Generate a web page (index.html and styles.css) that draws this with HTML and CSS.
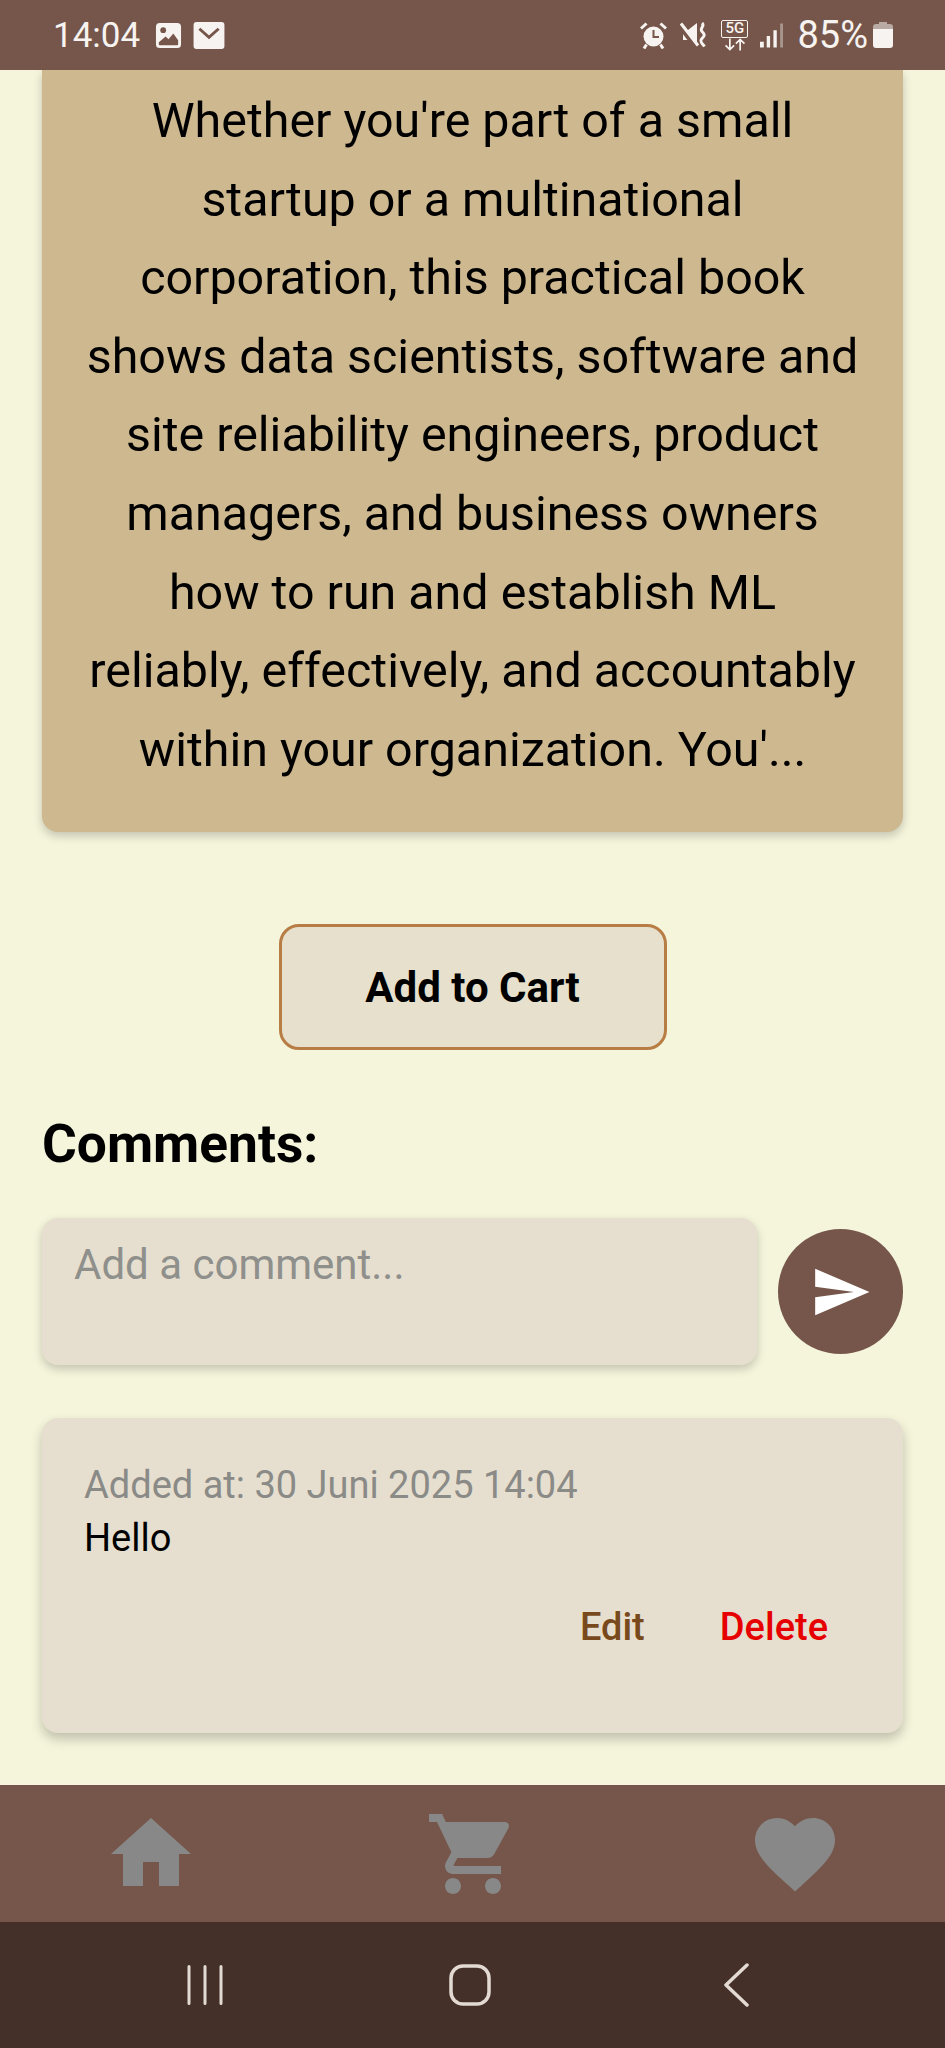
FILE: index.html
```html
<!DOCTYPE html>
<html lang="en">
<head>
<meta charset="utf-8">
<title>Book detail</title>
<link rel="stylesheet" href="styles.css">
</head>
<body>
<div class="phone">
  <header class="status">
    <div class="status-left">
      <span class="time">14:04</span>
      <svg class="ic-gallery" viewBox="0 0 28 28"><path fill="#f7f3f0" fill-rule="evenodd" d="M5 1h18a4 4 0 0 1 4 4v18a4 4 0 0 1-4 4H5a4 4 0 0 1-4-4V5a4 4 0 0 1 4-4zM4 21v2a1 1 0 0 0 1 1h18a1 1 0 0 0 1-1v-4l-5-7-5 6-3-3z"/><circle cx="8.500" cy="8.500" r="3" fill="#76564a"/></svg>
      <svg class="ic-mail" viewBox="0 0 32 28"><rect width="32" height="28" rx="3" fill="#f7f3f0"/><path d="M6 7l10 9 10-9" fill="none" stroke="#76564a" stroke-width="3"/></svg>
    </div>
    <div class="status-right">
      <svg class="ic-alarm" viewBox="0 0 27 27"><circle cx="13.500" cy="14.500" r="10" fill="#f7f3f0"/><path d="M13.500 8v7h5.500" fill="none" stroke="#76564a" stroke-width="2"/><path d="M1 6.500l5.500-5M26 6.500l-5.500-5M6.500 22.500l-2.500 4M20.500 22.500l2.500 4" stroke="#f7f3f0" stroke-width="3"/></svg>
      <svg class="ic-mute" viewBox="0 0 27 26"><path fill="#f7f3f0" d="M3 8h5l9-7v24l-9-7H3z"/><path d="M0 5l16 21" stroke="#76564a" stroke-width="4"/><path d="M1 1.500l17 22" stroke="#f7f3f0" stroke-width="3"/><path d="M22 1c3.500 3-3 5.500 0 8.500s3 4 0 7 .5 5 2.500 8" fill="none" stroke="#f7f3f0" stroke-width="3"/></svg>
      <div class="net">
        <span class="net-5g">5G</span>
        <svg class="net-arrows" viewBox="0 0 28 14"><path d="M8 0v12M3 8l5 5 5-5M20 14V2M15 6l5-5 5 5" fill="none" stroke="#f7f3f0" stroke-width="2"/></svg>
      </div>
      <svg class="ic-signal" viewBox="0 0 24 25"><rect x="0" y="19" width="4" height="6" fill="#f7f3f0"/><rect x="7" y="13" width="3.500" height="12" fill="#f7f3f0"/><rect x="14" y="7" width="3.500" height="18" fill="#f7f3f0"/><rect x="21" y="0" width="3" height="25" fill="#a8958c"/></svg>
      <span class="batt-text">85%</span>
      <svg class="ic-batt" viewBox="0 0 20 26"><path fill="#b9aaa3" d="M6 0h8v3h-8z"/><path fill="#b9aaa3" d="M3 2h14a3 3 0 0 1 3 3v3H0V5a3 3 0 0 1 3-3z"/><path fill="#f7f3f0" d="M0 7h20v16a3 3 0 0 1-3 3H3a3 3 0 0 1-3-3z"/></svg>
    </div>
  </header>

  <main class="content">
    <section class="desc-card">
      <p>Whether you're part of a small startup or a multinational corporation, this practical book shows data scientists, software and site reliability engineers, product managers, and business owners how to run and establish ML reliably, effectively, and accountably within your organization. You'...</p>
    </section>

    <div class="cart-wrap"><button class="cart-btn">Add to Cart</button></div>

    <h2 class="comments-title">Comments:</h2>

    <div class="comment-form">
      <div class="comment-input">Add a comment...</div>
      <button class="send-btn" aria-label="Send">
        <svg class="send-ic" viewBox="0 0 24 24"><path d="M2.010 21L23 12 2.010 3 2 10l15 2-15 2z" fill="#fff"/></svg>
      </button>
    </div>

    <article class="comment-card">
      <div class="comment-date">Added at: 30 Juni 2025 14:04</div>
      <div class="comment-text">Hello</div>
      <div class="comment-actions">
        <span class="act-edit">Edit</span>
        <span class="act-delete">Delete</span>
      </div>
    </article>
  </main>

  <nav class="tabbar">
    <svg class="tab-ic" viewBox="0 0 24 24"><path d="M10 20v-6h4v6h5v-8h3L12 3 2 12h3v8z"/></svg>
    <svg class="tab-ic" viewBox="0 0 24 24"><path d="M7 18c-1.100 0-1.990.9-1.990 2S5.900 22 7 22s2-.9 2-2-.9-2-2-2zM1 2v2h2l3.600 7.590-1.350 2.450c-.16.28-.25.61-.25.96 0 1.100.9 2 2 2h12v-2H7.420c-.14 0-.25-.11-.25-.25l.03-.12.9-1.630h7.450c.75 0 1.410-.41 1.750-1.030l3.580-6.490c.08-.14.12-.31.12-.48 0-.55-.45-1-1-1H5.210l-.94-2H1zm16 16c-1.100 0-1.990.9-1.990 2s.89 2 1.990 2 2-.9 2-2-.9-2-2-2z"/></svg>
    <svg class="tab-ic" viewBox="0 0 24 24"><path d="M12 21.350l-1.450-1.320C5.400 15.360 2 12.280 2 8.500 2 5.420 4.420 3 7.500 3c1.740 0 3.410.81 4.500 2.090C13.090 3.810 14.760 3 16.500 3 19.580 3 22 5.420 22 8.500c0 3.780-3.400 6.860-8.550 11.540L12 21.350z"/></svg>
  </nav>

  <footer class="sysnav">
    <svg class="sys-recent" viewBox="0 0 36 40"><path d="M2 1.500v37M18 1.500v37M34 1.500v37" fill="none" stroke="#e2dad3" stroke-width="3" stroke-linecap="round"/></svg>
    <svg class="sys-home" viewBox="0 0 42 42"><rect x="2" y="2" width="38" height="38" rx="12" fill="none" stroke="#e2dad3" stroke-width="3.500"/></svg>
    <svg class="sys-back" viewBox="0 0 26 44"><path d="M24 2L3 22l21 20" fill="none" stroke="#e2dad3" stroke-width="3.500" stroke-linecap="round" stroke-linejoin="round"/></svg>
  </footer>
</div>
</body>
</html>
```
FILE: styles.css
```css
* { box-sizing: border-box; }
html, body { margin: 0; padding: 0; }
body { font-family: Roboto, "Noto Sans", sans-serif; background: #f5f5dc; color: #000; }
.phone { width: 945px; height: 2048px; display: flex; flex-direction: column; overflow: hidden; background: #f5f5dc; }

.status { flex: none; height: 70px; background: #76564a; color: #f7f3f0; display: flex; justify-content: space-between; align-items: center; padding: 0 52px 0 53px; position: relative; z-index: 2; }
.status-left, .status-right { display: flex; align-items: center; }
.time { font-size: 35px; line-height: 1; margin-right: 15px; }
.ic-gallery { width: 27px; height: 27px; margin-right: 11px; }
.ic-mail { width: 32px; height: 27px; }
.ic-alarm { width: 27px; height: 27px; margin-right: 13px; }
.ic-mute { width: 27px; height: 26px; margin-right: 14px; }
.net { width: 27px; height: 31px; display: flex; flex-direction: column; align-items: center; margin-right: 12px; }
.net-5g { width: 27px; height: 18px; font-size: 15px; line-height: 15px; font-weight: 500; text-align: center; border: 1.500px solid #f7f3f0; border-radius: 2px; }
.net-arrows { width: 24px; height: 13px; flex: none; }
.ic-signal { width: 23px; height: 25px; margin-right: 14px; }
.batt-text { font-size: 38px; line-height: 1; margin-right: 5px; }
.ic-batt { width: 20px; height: 26px; }

.content { flex: 1; padding: 0 42px; display: flex; flex-direction: column; min-height: 0; }
.desc-card { background: #cdb88f; border-radius: 0 0 16px 16px; box-shadow: 0 4px 10px rgba(0,0,0,.2); padding: 12px 42px 43px; }
.desc-card p { margin: 0; font-size: 48.400px; line-height: 78.600px; text-align: center; }

.cart-wrap { display: flex; justify-content: center; margin-top: 92px; }
.cart-btn { width: 388px; height: 126px; background: #e6e0cc; border: 3px solid #b87d45; border-radius: 20px; font: 700 42px Roboto, sans-serif; color: #000; padding: 0; }

.comments-title { margin: 64px 0 0; font-size: 53.300px; line-height: 60px; font-weight: 700; }

.comment-form { display: flex; align-items: center; margin-top: 44px; gap: 21px; }
.comment-input { flex: 1; height: 147px; background: #e6dfcf; border-radius: 16px; box-shadow: 0 4px 10px rgba(0,0,0,.2); padding: 23px 32px; font-size: 42px; line-height: 48px; color: #8f8f8c; }
.send-btn { flex: none; width: 125px; height: 125px; border-radius: 50%; border: 0; background: #76564a; display: flex; align-items: center; justify-content: center; padding: 0; }
.send-ic { width: 62px; height: 62px; }

.comment-card { margin-top: 53px; height: 315px; background: #e6dfcf; border-radius: 16px; box-shadow: 0 6px 12px rgba(0,0,0,.22); padding: 43px 42px 0; }
.comment-date { font-size: 38px; line-height: 48px; color: #8a8a87; }
.comment-text { font-size: 38px; line-height: 48px; margin-top: 5px; }
.comment-actions { display: flex; justify-content: flex-end; gap: 75px; margin-top: 43px; padding-right: 33px; font-size: 38px; line-height: 44px; font-weight: 500; }
.act-edit { color: #78491c; }
.act-delete { color: #e60000; }

.tabbar { flex: none; height: 137px; background: #76564a; display: flex; align-items: center; justify-content: center; gap: 226px; }
.tab-ic { width: 96px; height: 96px; fill: #888888; }

.sysnav { flex: none; height: 126px; background: #452f29; display: flex; align-items: center; padding-left: 187px; }
.sys-recent { width: 36px; height: 40px; margin-right: 226px; }
.sys-home { width: 42px; height: 42px; margin-right: 232px; }
.sys-back { width: 26px; height: 44px; }
```
